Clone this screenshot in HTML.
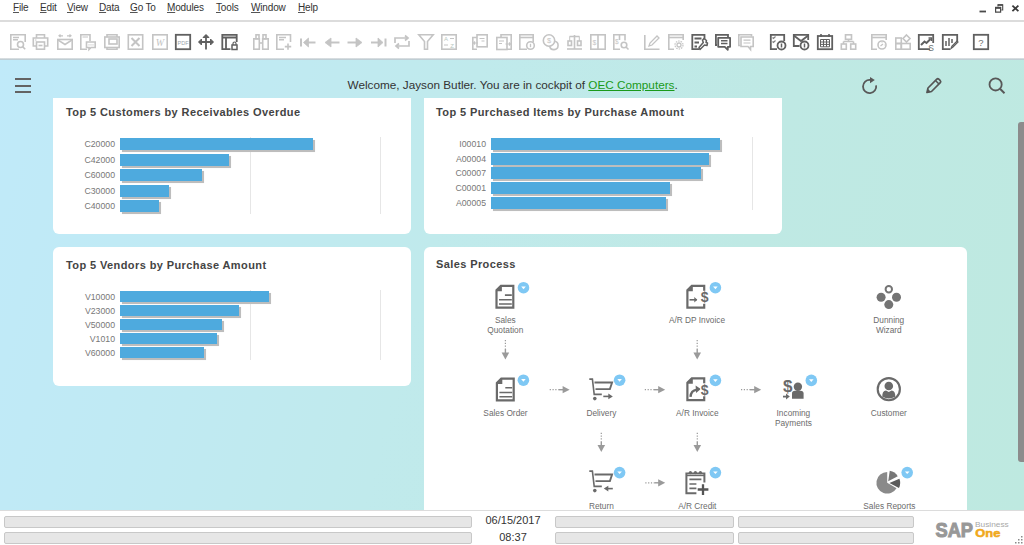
<!DOCTYPE html>
<html><head><meta charset="utf-8">
<style>
*{margin:0;padding:0;box-sizing:border-box}
html,body{width:1024px;height:545px;overflow:hidden;background:#fff;font-family:"Liberation Sans",sans-serif}
.abs{position:absolute}
#menubar{position:absolute;left:0;top:0;width:1024px;height:20px;background:#fff}
.mi{position:absolute;top:2px;font-size:10px;color:#333;line-height:12px;letter-spacing:-0.15px}
.mi u{text-decoration:underline;text-underline-offset:0.5px;text-decoration-color:#555}
#sep{position:absolute;left:0;top:20px;width:1024px;height:2px;background:#dcdcdc}
#toolbar{position:absolute;left:0;top:22px;width:1024px;height:37px;background:#fff}
#tbborder{position:absolute;left:0;top:58px;width:1024px;height:2px;background:linear-gradient(#e2e4e5,#b3c6ce)}
#main{position:absolute;left:0;top:60px;width:1024px;height:450px;background:linear-gradient(105deg,#c0eaf9 0%,#c0eaf4 18%,#c0eaec 42%,#bfe9e4 70%,#bee9e0 100%);overflow:hidden}
.card{position:absolute;background:#fff;border-radius:6px}
.ctitle{position:absolute;font-size:11px;font-weight:bold;color:#444;letter-spacing:0.4px}
.lbl{position:absolute;font-size:9.7px;color:#777;text-align:right;width:60px;transform:scaleX(0.9);transform-origin:100% 50%;line-height:12px}
.bar{position:absolute;height:12px;background:#4eaade;box-shadow:2px 2px 0.6px #bdbdbd}
.grid{position:absolute;width:1px;background:#e6e6e6}
#status{position:absolute;left:0;top:510px;width:1024px;height:35px;background:#fff;border-top:1px solid #dcdcdc}
.sbox{position:absolute;height:12px;background:#e6e6e6;border:1px solid #c8c8c8;border-radius:2px}
.stxt{position:absolute;font-size:11px;color:#333;text-align:center;width:80px}
.pl{position:absolute;font-size:8px;color:#666;text-align:center;width:90px;line-height:10px}
</style></head><body>
<div id="menubar">
<div class="mi" style="left:13px"><u>F</u>ile</div>
<div class="mi" style="left:40px"><u>E</u>dit</div>
<div class="mi" style="left:67px"><u>V</u>iew</div>
<div class="mi" style="left:99px"><u>D</u>ata</div>
<div class="mi" style="left:130px"><u>G</u>o To</div>
<div class="mi" style="left:167px"><u>M</u>odules</div>
<div class="mi" style="left:216px"><u>T</u>ools</div>
<div class="mi" style="left:251px"><u>W</u>indow</div>
<div class="mi" style="left:298px"><u>H</u>elp</div>
<svg class="abs" style="left:0;top:0" width="1024" height="20">
<path d="M979.5 11.5H986" stroke="#4a4a4a" stroke-width="1.8"/>
<path d="M995.6 12.2V8.2H1000.6V12.2Z" fill="none" stroke="#4a4a4a" stroke-width="1.2"/><path d="M995 7.6H1001.2" stroke="#4a4a4a" stroke-width="1.6"/>
<path d="M998 6.6V4.9H1002.7V10H1001.3" fill="none" stroke="#4a4a4a" stroke-width="1.1"/><path d="M997.8 5H1002.8" stroke="#4a4a4a" stroke-width="1.5"/>
<path d="M1012.4 5.6L1018.4 11.2M1018.4 5.6L1012.4 11.2" stroke="#3a3a3a" stroke-width="1.8"/>
</svg>
</div>
<div id="sep"></div>
<div id="toolbar"><!--TB--><svg class="abs" style="left:0;top:0" width="1024" height="37"><g transform="translate(10,12)" stroke="#c4c4c4" fill="none" stroke-width="1.6"><path d="M9 15.2H0.8V0.8H15.2V8"/><path d="M3 3.5H9M3 5.8H8"/><circle cx="10.5" cy="10.5" r="3"/><path d="M12.6 12.6L15.2 15.2"/></g><g transform="translate(32.5,12)" stroke="#c4c4c4" fill="none" stroke-width="1.6"><path d="M4 4V0.8H12V4"/><path d="M4 12H0.8V4H15.2V12H12"/><rect x="4" y="8" width="8" height="7.2"/><path d="M6 11.5H10"/><path d="M2.5 6H4" stroke-width="1"/></g><g transform="translate(57,12)" stroke="#c4c4c4" fill="none" stroke-width="1.6"><rect x="0.8" y="5.5" width="14.4" height="9.7"/><path d="M0.8 5.8L8 10.5L15.2 5.8"/><path d="M2 1.8H6M10 1.8H14M3.5 0.5L2 1.8L3.5 3.1M12.5 0.5L14 1.8L12.5 3.1" stroke-width="1.2"/></g><g transform="translate(80,12)" stroke="#c4c4c4" fill="none" stroke-width="1.6"><path d="M7 15.2H0.8V0.8H10V7"/><path d="M2.5 3H8" stroke-width="1"/><path d="M6.5 8H15.2V13.5H11L9 15.5V13.5H6.5Z"/><path d="M8.5 10.8H9.5M10.5 10.8H11.5M12.5 10.8H13.5" stroke-width="1.3"/></g><g transform="translate(104,12)" stroke="#c4c4c4" fill="none" stroke-width="1.6"><path d="M3 3V0.8H13V3"/><rect x="0.8" y="3" width="14.4" height="10.5"/><rect x="5" y="5" width="8" height="5"/><path d="M3 13.5V15.2H13V13.5"/></g><g transform="translate(127.5,12)" stroke="#c4c4c4" fill="none" stroke-width="1.6"><rect x="0.8" y="0.8" width="14.4" height="14.4"/><path d="M4 4L12 12M12 4L4 12" stroke-width="2"/></g><g transform="translate(152,12)" stroke="#c4c4c4" fill="none" stroke-width="1.6"><rect x="0.8" y="0.8" width="14.4" height="14.4"/><text x="8" y="12" font-size="10" font-style="italic" font-family="Liberation Serif" fill="#c4c4c4" stroke="none" text-anchor="middle">W</text></g><g transform="translate(175,12)" stroke="#606060" fill="none" stroke-width="1.6"><rect x="0.8" y="0.8" width="14.4" height="14.4" stroke-width="1.8"/><text x="8" y="10.5" font-size="5.5" font-family="Liberation Sans" fill="#9aa4ab" stroke="none" text-anchor="middle">PDF</text></g><g transform="translate(198,12)" stroke="#606060" fill="none" stroke-width="1.6"><path d="M8 1V15.5M1 8H15" stroke-width="1.8"/><path d="M5 3.5L8 0.5L11 3.5ZM3.5 5L0.5 8L3.5 11ZM12.5 5L15.5 8L12.5 11Z" fill="#606060" stroke-width="1"/></g><g transform="translate(221.5,12)" stroke="#606060" fill="none" stroke-width="1.6"><path d="M9 15.2H0.8V0.8H15.2V8" stroke-width="1.8"/><path d="M0.8 3.5H15.2M4.5 3.5V15.2" stroke-width="1.8"/><rect x="10.5" y="11" width="5" height="4.5" stroke-width="1.5"/><path d="M11.5 11V9.5A1.5 1.5 0 0 1 14.5 9.5V11" stroke-width="1.2"/></g><g transform="translate(253,12)" stroke="#c4c4c4" fill="none" stroke-width="1.6"><rect x="3" y="0.8" width="3" height="4"/><rect x="10" y="0.8" width="3" height="4"/><rect x="0.8" y="4.8" width="5.5" height="10.4"/><rect x="9.7" y="4.8" width="5.5" height="10.4"/><path d="M6.3 9H9.7"/></g><g transform="translate(276,12)" stroke="#c4c4c4" fill="none" stroke-width="1.6"><path d="M8 15.2H0.8V0.8H14.5V8"/><path d="M3 3.5H10M3 5.8H8"/><path d="M12 9.5V15.8M8.8 12.6H15.2"/></g><g transform="translate(300,12)" stroke="#c4c4c4" fill="none" stroke-width="1.6"><path d="M1 4.5V12.5" stroke-width="2"/><path d="M7 8.5H15.5" stroke-width="2"/><path d="M8.5 4L3.5 8.5L8.5 13Z" fill="#c4c4c4" stroke-width="0.8"/></g><g transform="translate(324,12)" stroke="#c4c4c4" fill="none" stroke-width="1.6"><path d="M5 8.5H15.5" stroke-width="2"/><path d="M7 4L1 8.5L7 13Z" fill="#c4c4c4" stroke-width="0.8"/></g><g transform="translate(347,12)" stroke="#c4c4c4" fill="none" stroke-width="1.6"><path d="M0.5 8.5H11" stroke-width="2"/><path d="M9 4L15 8.5L9 13Z" fill="#c4c4c4" stroke-width="0.8"/></g><g transform="translate(370.5,12)" stroke="#c4c4c4" fill="none" stroke-width="1.6"><path d="M15 4.5V12.5" stroke-width="2"/><path d="M0.5 8.5H9" stroke-width="2"/><path d="M7.5 4L12.5 8.5L7.5 13Z" fill="#c4c4c4" stroke-width="0.8"/></g><g transform="translate(394,12)" stroke="#c4c4c4" fill="none" stroke-width="1.6"><path d="M1 9V4H13.5M11 1.5L14 4L11 6.5" stroke-width="1.7"/><path d="M15 7V12H2.5M5 9.5L2 12L5 14.5" stroke-width="1.7"/></g><g transform="translate(418,12)" stroke="#c4c4c4" fill="none" stroke-width="1.6"><path d="M0.8 0.8H15.2L9.5 7.5V15.2H6.5V7.5Z"/></g><g transform="translate(441,12)" stroke="#c4c4c4" fill="none" stroke-width="1.6"><rect x="0.8" y="0.8" width="14.4" height="14.4"/><text x="5" y="7" font-size="6" font-family="Liberation Sans" fill="#b8c8c0" stroke="none" text-anchor="middle">A</text><text x="11" y="13.5" font-size="6" font-family="Liberation Sans" fill="#b8c8c0" stroke="none" text-anchor="middle">Z</text><path d="M9 4.5H13M3 11H7" stroke-width="1"/></g><g transform="translate(472,12)" stroke="#c4c4c4" fill="none" stroke-width="1.6"><path d="M5 15.2H0.8V3.5H5"/><rect x="5" y="0.8" width="10.2" height="12"/><path d="M7.5 4.5H12.5M9.5 7H12.5" stroke-width="1.1"/><path d="M1.5 9H6M3 7.5L1.5 9L3 10.5" stroke-width="1.1"/></g><g transform="translate(496,12)" stroke="#c4c4c4" fill="none" stroke-width="1.6"><path d="M11 15.2H15.2V0.8H5V3.5"/><rect x="0.8" y="3.5" width="10.2" height="12"/><path d="M3 7H8M3 9.5H6" stroke-width="1.1"/><path d="M9.5 10H14.5M13 8.5L14.5 10L13 11.5" stroke-width="1.1"/></g><g transform="translate(519,12)" stroke="#c4c4c4" fill="none" stroke-width="1.6"><path d="M8 15.2H0.8V0.8H14.2V8"/><path d="M0.8 3.5H14.2"/><circle cx="11.5" cy="11.5" r="3.8"/><path d="M11.5 9.8V13.2" stroke-width="1.3"/></g><g transform="translate(542.5,12)" stroke="#c4c4c4" fill="none" stroke-width="1.6"><circle cx="6.5" cy="6.5" r="5.7"/><path d="M11.8 7.2A4.2 4.2 0 1 1 7.2 11.8"/><text x="6.5" y="9.2" font-size="7.5" font-family="Liberation Sans" fill="#c4c4c4" stroke="none" text-anchor="middle">$</text></g><g transform="translate(566.5,12)" stroke="#c4c4c4" fill="none" stroke-width="1.6"><path d="M0.5 15H15.5"/><path d="M8 1V15M3 2.5H13"/><rect x="1.5" y="7" width="3.5" height="4.5"/><rect x="11" y="7" width="3.5" height="4.5"/><path d="M3.2 2.5V7M12.8 2.5V7" stroke-width="1"/></g><g transform="translate(590,12)" stroke="#c4c4c4" fill="none" stroke-width="1.6"><rect x="0.8" y="0.8" width="14.4" height="14.4"/><path d="M8 0.8V15.2"/><text x="4.4" y="10.5" font-size="7" font-family="Liberation Sans" fill="#c4c4c4" stroke="none" text-anchor="middle">$</text></g><g transform="translate(613,12)" stroke="#c4c4c4" fill="none" stroke-width="1.6"><path d="M7 15.2H0.8V0.8H12V6.5"/><path d="M6.5 0.8V6"/><text x="3.7" y="9.5" font-size="6.5" font-family="Liberation Sans" fill="#c4c4c4" stroke="none" text-anchor="middle">$</text><circle cx="11" cy="11" r="2.8"/><path d="M13 13L15.5 15.5"/></g><g transform="translate(644,12)" stroke="#c4c4c4" fill="none" stroke-width="1.6"><path d="M0.8 1V15.2H15.5"/><path d="M5 12L6 9L13 2L15 4L8 11Z" stroke-width="1.3"/></g><g transform="translate(668,12)" stroke="#c4c4c4" fill="none" stroke-width="1.6"><path d="M6 15.2H0.8V0.8H15.2V6"/><path d="M0.8 3.5H15.2"/><circle cx="11" cy="11" r="2" stroke-width="1.3"/><circle cx="11" cy="11" r="4" stroke-width="1.2" stroke-dasharray="1.5 1"/></g><g transform="translate(691.5,12)" stroke="#606060" fill="none" stroke-width="1.6"><path d="M8 15.2H0.8V0.8H13V5" stroke-width="1.8"/><path d="M3 4.5H10M3 8.5H7.5M3 12.5H5.5" stroke-width="1.8"/><path d="M12.5 4.5L11 6.3L11.8 8.5L7.5 13.5L8.5 15.5L13 11L15.5 11.5L16 9L14.5 8.5L15 6.5Z" fill="#fff" stroke-width="1.5" stroke-linejoin="round"/></g><g transform="translate(715,12)" stroke="#606060" fill="none" stroke-width="1.6"><path d="M2 11H0.9V0.9H13V3" stroke-width="1.8"/><path d="M3.2 3.8H15.1V12.8H12.8V15.8L9.8 12.8H3.2Z" stroke-width="1.8" stroke-linejoin="round"/><path d="M6 6.8H12.5M6 9.6H12.5" stroke-width="1.5"/></g><g transform="translate(738,12)" stroke="#c4c4c4" fill="none" stroke-width="1.6"><path d="M2.5 11.5H0.8V0.8H13.5V2.5"/><path d="M3 3H15.2V12.5H12.5V15.5L10 12.5H3Z"/><path d="M5.5 6.2H12.5M5.5 9H12.5" stroke-width="1.2"/></g><g transform="translate(770,12)" stroke="#606060" fill="none" stroke-width="1.6"><path d="M7 15.2H0.8V0.8H14.2V7" stroke-width="1.8"/><path d="M2.5 3.5L3.5 4.5L5.5 2.5M2.5 7.5L3.5 8.5L5.5 6.5" stroke-width="1.1" stroke="#808080"/><circle cx="11.5" cy="11.5" r="4" stroke-width="1.8"/><path d="M11.5 9.5V13.5" stroke-width="1.5"/></g><g transform="translate(793,12)" stroke="#606060" fill="none" stroke-width="1.6"><path d="M6.5 12H0.8V0.8H15.2V6" stroke-width="1.8"/><path d="M0.8 1.5L8 7L15.2 1.5" stroke-width="1.8"/><circle cx="11.5" cy="11.5" r="4" stroke-width="1.8"/><path d="M11.5 9.5V13.5" stroke-width="1.5"/></g><g transform="translate(817,12)" stroke="#606060" fill="none" stroke-width="1.6"><rect x="0.8" y="2" width="14.4" height="13.2" stroke-width="1.8"/><path d="M4 0V3M12 0V3" stroke-width="1.6"/><path d="M3.5 5.5H12.5V12.8H3.5ZM3.5 8H12.5M3.5 10.4H12.5M6.5 5.5V12.8M9.5 5.5V12.8" stroke-width="1"/></g><g transform="translate(840.5,12)" stroke="#c4c4c4" fill="none" stroke-width="1.6"><rect x="5" y="0.8" width="6" height="4.5"/><path d="M8 5.3V7.5M3 7.5H13M3 7.5V10M13 7.5V10"/><rect x="0.8" y="10" width="5" height="5.2"/><rect x="10.2" y="10" width="5" height="5.2"/></g><g transform="translate(871,12)" stroke="#c4c4c4" fill="none" stroke-width="1.6"><path d="M6 15.2H0.8V0.8H15.2V6"/><path d="M0.8 3.5H15.2"/><circle cx="11" cy="11" r="4"/><path d="M9.5 12L12 10M11 8.5V9M13.5 11H13" stroke-width="1.2"/></g><g transform="translate(895,12)" stroke="#c4c4c4" fill="none" stroke-width="1.6"><rect x="0.8" y="4" width="5.5" height="5.5"/><rect x="0.8" y="9.5" width="5.5" height="5.7"/><rect x="6.3" y="9.5" width="8.9" height="5.7"/><path d="M11.5 1L15 4.5L11.5 8L8 4.5Z"/></g><g transform="translate(918,12)" stroke="#606060" fill="none" stroke-width="1.6"><path d="M12 15.2H0.8V0.8H15.2V9" stroke-width="1.8"/><path d="M3 11L6.5 7.5L8.5 9L12.5 5" stroke-width="2"/><path d="M10.5 4H13.5V7" stroke-width="1.5"/><text x="13" y="16.8" font-size="8.5" font-family="Liberation Sans" fill="#6a7070" stroke="none" text-anchor="middle">S</text></g><g transform="translate(942,12)" stroke="#606060" fill="none" stroke-width="1.6"><path d="M8 15.2H0.8V0.8H15.2V7" stroke-width="1.8"/><path d="M4 12V7M7 12V4M10 9V5" stroke-width="1.5"/><path d="M9 14.5L10 12L15 7L16 8L11 13Z" stroke-width="1.2"/></g><g transform="translate(973,12)" stroke="#606060" fill="none" stroke-width="1.6"><rect x="0.8" y="0.8" width="14.4" height="14.4" stroke-width="1.8"/><text x="8" y="11.8" font-size="9.5" font-family="Liberation Sans" fill="#707070" stroke="none" text-anchor="middle">?</text></g></svg><!--/TB--></div>
<div id="tbborder"></div>
<div id="main">
<!-- hamburger -->
<div class="abs" style="left:15px;top:18px;width:16px;height:2px;background:#636363"></div>
<div class="abs" style="left:15px;top:25px;width:16px;height:2px;background:#636363"></div>
<div class="abs" style="left:15px;top:31px;width:16px;height:2px;background:#636363"></div>
<div class="abs" style="left:347.5px;top:17.5px;font-size:11.75px;color:#333;white-space:nowrap">Welcome, Jayson Butler. You are in cockpit of <span style="color:#1a9a1a;text-decoration:underline">OEC Computers</span>.</div>

<!--HDR--><svg class="abs" style="left:0;top:-60px" width="1024" height="160">
<path d="M876.1 85.4A6.6 6.6 0 1 1 870.2 80" fill="none" stroke="#585858" stroke-width="1.8"/>
<path d="M870 77L874.8 80.1L870 83.2Z" fill="#585858"/>
<g transform="translate(926,77.5)"><path d="M1 15L2 10.5L10.8 1.7Q11.8 0.8 12.8 1.7L14.3 3.2Q15.2 4.2 14.3 5.2L5.5 14Z" fill="none" stroke="#555" stroke-width="1.7" stroke-linejoin="round"/><path d="M0.6 15.4L1.6 11L5 14.4Z" fill="#555"/><path d="M9.5 3L13 6.5" stroke="#555" stroke-width="1.5"/></g>
<circle cx="995.6" cy="84.4" r="6.1" fill="none" stroke="#585858" stroke-width="1.8"/>
<path d="M1000 88.8L1004.5 93.3" stroke="#585858" stroke-width="2"/>
</svg><!--/HDR-->
<!-- card 1 -->
<div class="card" style="left:53px;top:38px;width:358px;height:136px;border-radius:0 0 6px 6px">
<div class="ctitle" style="left:13px;top:8px">Top 5 Customers by Receivables Overdue</div>
<div class="grid" style="left:197px;top:39px;height:77px"></div>
<div class="grid" style="left:327px;top:39px;height:77px"></div>
<div class="lbl" style="left:2px;top:40px">C20000</div>
<div class="lbl" style="left:2px;top:56px">C42000</div>
<div class="lbl" style="left:2px;top:71px">C60000</div>
<div class="lbl" style="left:2px;top:87px">C30000</div>
<div class="lbl" style="left:2px;top:102px">C40000</div>
<div class="bar" style="left:67px;top:40px;width:193px"></div>
<div class="bar" style="left:67px;top:56px;width:109px"></div>
<div class="bar" style="left:67px;top:71px;width:82px"></div>
<div class="bar" style="left:67px;top:87px;width:49px"></div>
<div class="bar" style="left:67px;top:102px;width:39px"></div>
</div>

<!-- card 2 -->
<div class="card" style="left:424px;top:38px;width:358px;height:136px;border-radius:0 0 6px 6px">
<div class="ctitle" style="left:12px;top:8px">Top 5 Purchased Items by Purchase Amount</div>
<div class="grid" style="left:328px;top:39px;height:73px"></div>
<div class="lbl" style="left:2px;top:40px">I00010</div>
<div class="lbl" style="left:2px;top:55px">A00004</div>
<div class="lbl" style="left:2px;top:69px">C00007</div>
<div class="lbl" style="left:2px;top:84px">C00001</div>
<div class="lbl" style="left:2px;top:99px">A00005</div>
<div class="bar" style="left:67px;top:40px;width:229px"></div>
<div class="bar" style="left:67px;top:55px;width:218px"></div>
<div class="bar" style="left:67px;top:69px;width:210px"></div>
<div class="bar" style="left:67px;top:84px;width:179px"></div>
<div class="bar" style="left:67px;top:99px;width:175px"></div>
</div>

<!-- card 3 -->
<div class="card" style="left:53px;top:187px;width:358px;height:139px">
<div class="ctitle" style="left:13px;top:11.5px">Top 5 Vendors by Purchase Amount</div>
<div class="grid" style="left:197px;top:43px;height:70px"></div>
<div class="grid" style="left:327px;top:43px;height:70px"></div>
<div class="lbl" style="left:2px;top:44px">V10000</div>
<div class="lbl" style="left:2px;top:58px">V23000</div>
<div class="lbl" style="left:2px;top:72px">V50000</div>
<div class="lbl" style="left:2px;top:86px">V1010</div>
<div class="lbl" style="left:2px;top:100px">V60000</div>
<div class="bar" style="left:67px;top:44px;height:11px;width:149px"></div>
<div class="bar" style="left:67px;top:58px;height:11px;width:119px"></div>
<div class="bar" style="left:67px;top:72px;height:11px;width:102px"></div>
<div class="bar" style="left:67px;top:86px;height:11px;width:97px"></div>
<div class="bar" style="left:67px;top:100px;height:11px;width:84px"></div>
</div>

<!-- card 4 -->
<div class="card" style="left:424px;top:187px;width:543px;height:300px">
<div class="ctitle" style="left:12px;top:11px">Sales Process</div>
</div>

<!--PR--><svg class="abs" style="left:0;top:0" width="1024" height="450"><g transform="translate(0,-60)"><g transform="translate(495.4,284.8)"><path d="M5.5 1.1H17.9V22.9H1.1V5.5Z" fill="none" stroke="#6a6a6a" stroke-width="2.2" stroke-linejoin="miter"/><path d="M0.5 6.5L6.5 0.5V6.5Z" fill="#6a6a6a"/><path d="M9.5 10.3H16.4M3.6 15H16.4M3.6 19.2H16.4" stroke="#6a6a6a" stroke-width="1.6"/></g><circle cx="523.5" cy="287.7" r="5.8" fill="#7fc8f4"/><path d="M521.2 286.59999999999997H525.8L523.5 289.2Z" fill="#fff"/><text x="505.3" y="323.0" text-anchor="middle" font-size="8.3" fill="#6c6c6c" font-family="Liberation Sans">Sales</text><text x="505.3" y="332.5" text-anchor="middle" font-size="8.3" fill="#6c6c6c" font-family="Liberation Sans">Quotation</text><g transform="translate(686.3,284.8)"><path d="M5.5 1.1H17.9V22.9H1.1V5.5Z" fill="none" stroke="#6a6a6a" stroke-width="2.2" stroke-linejoin="miter"/><path d="M0.5 6.5L6.5 0.5V6.5Z" fill="#6a6a6a"/><path d="M3.2 15H10.5" stroke="#6a6a6a" stroke-width="1.6"/><path d="M8 12.2L11 15L8 17.8Z" fill="#6a6a6a"/><rect x="14" y="6" width="8.5" height="13" fill="#fff"/><text x="18.4" y="17.6" text-anchor="middle" font-size="14" font-weight="bold" fill="#6a6a6a" font-family="Liberation Sans">$</text></g><circle cx="715.4" cy="287.7" r="5.8" fill="#7fc8f4"/><path d="M713.1 286.59999999999997H717.6999999999999L715.4 289.2Z" fill="#fff"/><text x="697" y="323.0" text-anchor="middle" font-size="8.3" fill="#6c6c6c" font-family="Liberation Sans">A/R DP Invoice</text><g fill="#747474"><circle cx="888.8" cy="289.2" r="3.2" fill="none" stroke="#747474" stroke-width="2"/><circle cx="881.1" cy="297.2" r="4.5"/><circle cx="896.5" cy="297.2" r="4.5"/><circle cx="888.8" cy="304.6" r="4.5"/></g><text x="888.8" y="323.0" text-anchor="middle" font-size="8.3" fill="#6c6c6c" font-family="Liberation Sans">Dunning</text><text x="888.8" y="332.5" text-anchor="middle" font-size="8.3" fill="#6c6c6c" font-family="Liberation Sans">Wizard</text><path d="M505.4 340V349" stroke="#9a9a9a" stroke-width="1.2" stroke-dasharray="1.2 1.6"/><path d="M505.4 349V353.5" stroke="#9a9a9a" stroke-width="1.4"/><path d="M501.59999999999997 352.5H509.2L505.4 359.5Z" fill="#9a9a9a"/><path d="M697.2 340V349" stroke="#9a9a9a" stroke-width="1.2" stroke-dasharray="1.2 1.6"/><path d="M697.2 349V353.5" stroke="#9a9a9a" stroke-width="1.4"/><path d="M693.4000000000001 352.5H701.0L697.2 359.5Z" fill="#9a9a9a"/><g transform="translate(495.8,377.5)"><path d="M5.5 1.1H17.9V22.9H1.1V5.5Z" fill="none" stroke="#6a6a6a" stroke-width="2.2" stroke-linejoin="miter"/><path d="M0.5 6.5L6.5 0.5V6.5Z" fill="#6a6a6a"/><path d="M9.5 10.3H16.4M3.6 15H16.4M3.6 19.2H16.4" stroke="#6a6a6a" stroke-width="1.6"/></g><circle cx="523.4" cy="380.2" r="5.8" fill="#7fc8f4"/><path d="M521.1 379.09999999999997H525.6999999999999L523.4 381.7Z" fill="#fff"/><text x="505.5" y="416.2" text-anchor="middle" font-size="8.3" fill="#6c6c6c" font-family="Liberation Sans">Sales Order</text><path d="M549.7 389.7H558.7" stroke="#9a9a9a" stroke-width="1.2" stroke-dasharray="1.2 1.6"/><path d="M558.7 389.7H563.6" stroke="#9a9a9a" stroke-width="1.4"/><path d="M562.6 386.09999999999997V393.3L569.6 389.7Z" fill="#9a9a9a"/><g transform="translate(589.3,378.2)" fill="none" stroke="#6a6a6a"><path d="M0 0.9H3.1L4.9 16.2H12.5" stroke-width="1.6"/><path d="M5.2 4.3H22.8L20.6 10.9H6.2" stroke-width="1.9"/><circle cx="5.5" cy="20.4" r="1.8" fill="#6a6a6a" stroke="none"/><path d="M14 18.2H20" stroke-width="1.6"/><path d="M19 15.4L23.5 18.2L19 21Z" fill="#6a6a6a" stroke="none"/></g><circle cx="619.6" cy="380.2" r="5.8" fill="#7fc8f4"/><path d="M617.3000000000001 379.09999999999997H621.9L619.6 381.7Z" fill="#fff"/><text x="601.4" y="416.2" text-anchor="middle" font-size="8.3" fill="#6c6c6c" font-family="Liberation Sans">Delivery</text><path d="M644.8 389.7H653.8" stroke="#9a9a9a" stroke-width="1.2" stroke-dasharray="1.2 1.6"/><path d="M653.8 389.7H659.2" stroke="#9a9a9a" stroke-width="1.4"/><path d="M658.2 386.09999999999997V393.3L665.2 389.7Z" fill="#9a9a9a"/><g transform="translate(686.3,377.3)"><path d="M5.5 1.1H17.9V22.9H1.1V5.5Z" fill="none" stroke="#6a6a6a" stroke-width="2.2" stroke-linejoin="miter"/><path d="M0.5 6.5L6.5 0.5V6.5Z" fill="#6a6a6a"/><path d="M4.2 19.5C4.5 15.5 7 12.8 10.5 12.3" fill="none" stroke="#6a6a6a" stroke-width="2.4"/><path d="M9.3 8.3L14.5 11.8L9.8 15.8Z" fill="#6a6a6a"/><rect x="14" y="6" width="8.5" height="13" fill="#fff"/><text x="18.4" y="17.6" text-anchor="middle" font-size="14" font-weight="bold" fill="#6a6a6a" font-family="Liberation Sans">$</text></g><circle cx="715.4" cy="380.4" r="5.8" fill="#7fc8f4"/><path d="M713.1 379.29999999999995H717.6999999999999L715.4 381.9Z" fill="#fff"/><text x="697.3" y="416.2" text-anchor="middle" font-size="8.3" fill="#6c6c6c" font-family="Liberation Sans">A/R Invoice</text><path d="M741 389.7H750" stroke="#9a9a9a" stroke-width="1.2" stroke-dasharray="1.2 1.6"/><path d="M750 389.7H755.2" stroke="#9a9a9a" stroke-width="1.4"/><path d="M754.2 386.09999999999997V393.3L761.2 389.7Z" fill="#9a9a9a"/><text x="787.8" y="392.3" text-anchor="middle" font-size="17" font-weight="bold" fill="#6a6a6a" font-family="Liberation Sans">$</text><path d="M783 396.6H788" stroke="#6a6a6a" stroke-width="1.8"/><path d="M786 393.6L789.8 396.6L786 399.6Z" fill="#6a6a6a"/><circle cx="797.9" cy="386.8" r="4.2" fill="#6a6a6a"/><path d="M792 398.8V393.5Q792 391 795 390.8H800.5Q803.6 391 803.6 393.5V398.8Z" fill="#6a6a6a"/><circle cx="811.3" cy="380.4" r="5.8" fill="#7fc8f4"/><path d="M809.0 379.29999999999995H813.5999999999999L811.3 381.9Z" fill="#fff"/><text x="793.4" y="416.2" text-anchor="middle" font-size="8.3" fill="#6c6c6c" font-family="Liberation Sans">Incoming</text><text x="793.4" y="425.7" text-anchor="middle" font-size="8.3" fill="#6c6c6c" font-family="Liberation Sans">Payments</text><circle cx="888.8" cy="389.2" r="11.1" fill="none" stroke="#6a6a6a" stroke-width="2.1"/><circle cx="888.8" cy="386" r="4.3" fill="#6a6a6a"/><path d="M882.3 396.8Q882 391.2 886 390.6L888.8 392L891.6 390.6Q895.5 391.2 895.3 396.8Q892 398.5 888.8 398.5Q885.5 398.5 882.3 396.8Z" fill="#6a6a6a"/><text x="888.8" y="416.2" text-anchor="middle" font-size="8.3" fill="#6c6c6c" font-family="Liberation Sans">Customer</text><path d="M601.3 432.7V441.7" stroke="#9a9a9a" stroke-width="1.2" stroke-dasharray="1.2 1.6"/><path d="M601.3 441.7V446" stroke="#9a9a9a" stroke-width="1.4"/><path d="M597.5 445H605.0999999999999L601.3 452Z" fill="#9a9a9a"/><path d="M697.3 432.7V441.7" stroke="#9a9a9a" stroke-width="1.2" stroke-dasharray="1.2 1.6"/><path d="M697.3 441.7V446" stroke="#9a9a9a" stroke-width="1.4"/><path d="M693.5 445H701.0999999999999L697.3 452Z" fill="#9a9a9a"/><g transform="translate(589.3,470.2)" fill="none" stroke="#6a6a6a"><path d="M0 0.9H3.1L4.9 16.2H12.5" stroke-width="1.6"/><path d="M5.2 4.3H22.8L20.6 10.9H6.2" stroke-width="1.9"/><circle cx="5.5" cy="20.4" r="1.8" fill="#6a6a6a" stroke="none"/><path d="M17.5 18.4H23.5" stroke-width="1.6"/><path d="M19 15.6L14.5 18.4L19 21.2Z" fill="#6a6a6a" stroke="none"/></g><circle cx="619.6" cy="472.6" r="5.8" fill="#7fc8f4"/><path d="M617.3000000000001 471.5H621.9L619.6 474.1Z" fill="#fff"/><text x="601.4" y="509.0" text-anchor="middle" font-size="8.3" fill="#6c6c6c" font-family="Liberation Sans">Return</text><path d="M645.3 482.8H654.3" stroke="#9a9a9a" stroke-width="1.2" stroke-dasharray="1.2 1.6"/><path d="M654.3 482.8H659.2" stroke="#9a9a9a" stroke-width="1.4"/><path d="M658.2 479.2V486.40000000000003L665.2 482.8Z" fill="#9a9a9a"/><g transform="translate(685.4,470.4)"><path d="M11 22.8H1V3.2H19V12" fill="none" stroke="#6a6a6a" stroke-width="2"/><path d="M1 5.2H19" stroke="#6a6a6a" stroke-width="1.2"/><circle cx="5" cy="2.2" r="1.6" fill="#6a6a6a"/><circle cx="10" cy="2.2" r="1.6" fill="#6a6a6a"/><circle cx="15" cy="2.2" r="1.6" fill="#6a6a6a"/><path d="M4 9H16M4 13.6H11M4 18H11" stroke="#6a6a6a" stroke-width="1.7"/><path d="M17.6 13.8V24.5M12.3 19.1H23" stroke="#555" stroke-width="2.3"/></g><circle cx="715.4" cy="472.6" r="5.8" fill="#7fc8f4"/><path d="M713.1 471.5H717.6999999999999L715.4 474.1Z" fill="#fff"/><text x="697.3" y="509.0" text-anchor="middle" font-size="8.3" fill="#6c6c6c" font-family="Liberation Sans">A/R Credit</text><path d="M887.2 482.8L896.55 488.20A10.8 10.8 0 1 1 887.20 472.00Z" fill="#8a8a8a"/><path d="M888.23 481.33L889.74 470.63A10.8 10.8 0 0 1 897.77 476.26Z" fill="#777"/><path d="M889.40 482.88L899.41 478.83A10.8 10.8 0 0 1 898.93 487.95Z" fill="#5c5c5c"/><circle cx="907.2" cy="472.6" r="5.8" fill="#7fc8f4"/><path d="M904.9000000000001 471.5H909.5L907.2 474.1Z" fill="#fff"/><text x="889.4" y="509.0" text-anchor="middle" font-size="8.3" fill="#6c6c6c" font-family="Liberation Sans">Sales Reports</text></g></svg><!--/PR-->
<!-- scrollbar -->
<div class="abs" style="left:1018px;top:62px;width:6px;height:340px;background:#8c8c8c;border-radius:3px 0 0 3px"></div>
</div>
<div id="status">
<div class="sbox" style="left:4px;top:5px;width:468px"></div>
<div class="sbox" style="left:4px;top:21px;width:468px"></div>
<div class="stxt" style="left:473px;top:3px">06/15/2017</div>
<div class="stxt" style="left:473px;top:20px">08:37</div>
<div class="sbox" style="left:555px;top:5px;width:179px"></div>
<div class="sbox" style="left:555px;top:21px;width:179px"></div>
<div class="sbox" style="left:738px;top:5px;width:176px"></div>
<div class="sbox" style="left:738px;top:21px;width:176px"></div>
<svg class="abs" style="left:0;top:-511px" width="1024" height="545">
<text x="935.5" y="536.5" font-size="21" font-weight="bold" fill="#989898" stroke="#989898" stroke-width="1.1" font-family="Liberation Sans" textLength="37.5" lengthAdjust="spacingAndGlyphs">SAP</text>
<text x="975" y="526.7" font-size="8.1" fill="#a8a8a8" font-family="Liberation Sans" textLength="33.7" lengthAdjust="spacingAndGlyphs">Business</text>
<text x="975.3" y="536.6" font-size="10.8" font-weight="bold" fill="#f0a81c" stroke="#f0a81c" stroke-width="0.5" font-family="Liberation Sans" textLength="25" lengthAdjust="spacingAndGlyphs">One</text>
<g fill="#8a8a8a"><rect x="1021" y="536" width="1.5" height="1.5"/><rect x="1018" y="539" width="1.5" height="1.5"/><rect x="1021" y="539" width="1.5" height="1.5"/><rect x="1015" y="542" width="1.5" height="1.5"/><rect x="1018" y="542" width="1.5" height="1.5"/><rect x="1021" y="542" width="1.5" height="1.5"/></g>
</svg>
</div>
</body></html>
